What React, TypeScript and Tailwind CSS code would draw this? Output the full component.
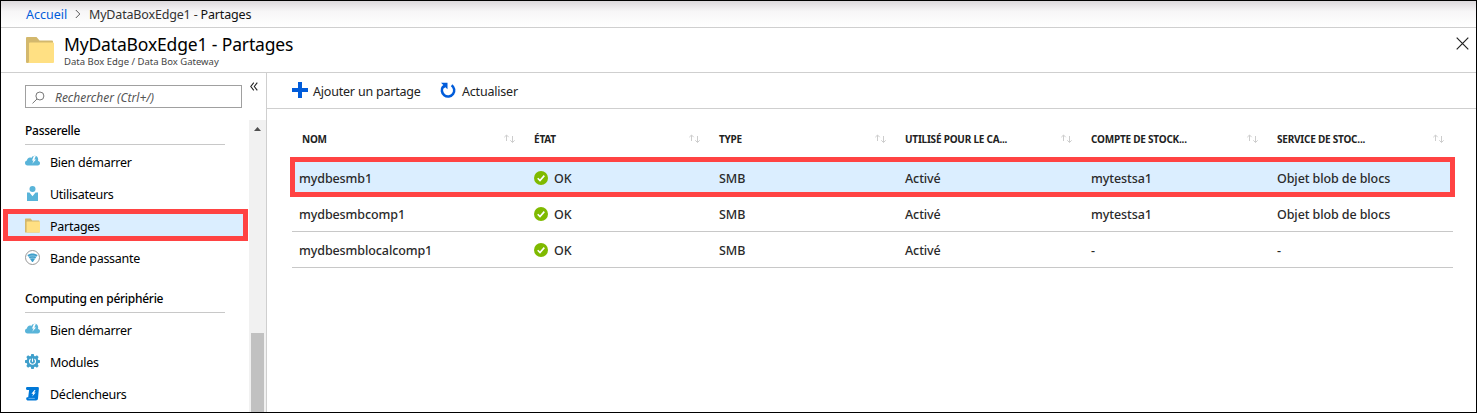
import React from "react";

const CloudIcon = () => (
  <svg width="15" height="15" viewBox="0 0 15 15">
    <path d="M2.500 11.500C1 11.500 0 10.400 0 9.100c0-1.300.8-2.300 2-2.500C2 5 3.300 3.600 5 3.600c.5 0 .9.1 1.300.3C7 2.500 8.300 1.800 9.800 1.800c2 0 3.400 1.500 3.400 3.600 0 .6-.1 1.200-.2 1.700 1.200.1 2 1 2 2.200 0 1.300-.9 2.200-2.200 2.200z" fill="#59b4d9" />
    <path d="M8.800 2L7 6.600h1.600L7.300 9.800 11 5.500H9.300L10.800 2z" fill="#fff" />
  </svg>
);

const UserIcon = () => (
  <svg width="15" height="15" viewBox="0 0 15 15">
    <circle cx="7.500" cy="3" r="3" fill="#59b4d9" />
    <path d="M2 6.500h2.500l3 3.700 3-3.700H13V15H2z" fill="#59b4d9" />
  </svg>
);

const FolderIcon = ({ size }: { size: number }) => (
  <svg width={size} height={size} viewBox="0 0 28 28">
    <path d="M1 1h9.500l3 3.500H26a1 1 0 0 1 1 1V27H1a1 1 0 0 1-1-1V2a1 1 0 0 1 1-1z" fill="#d3b86d" />
    <path d="M4 6.500h23a1 1 0 0 1 1 1V26a1 1 0 0 1-1 1H1.500C2.500 27 3 26 3 25V7.500a1 1 0 0 1 1-1z" fill="#ffe083" />
  </svg>
);

const BandwidthIcon = () => (
  <svg width="15" height="15" viewBox="0 0 15 15">
    <circle cx="7.500" cy="7.500" r="7" fill="#fff" stroke="#8c8c8c" strokeWidth=".9" />
    <path d="M2.300 5.100c3-2.100 7.400-2.100 10.400 0L7.900 12h-.8z" fill="#3f9fcb" />
    <path d="M3.200 6.900c2.400-1.400 6-1.400 8.600 0M4.600 8.900c1.600-1 4.200-1 5.800 0" fill="none" stroke="#fff" strokeWidth=".4" />
  </svg>
);

const GearIcon = () => (
  <svg width="15" height="15" viewBox="0 0 15 15">
    <g fill="#3f9fcb">
      <circle cx="7.500" cy="7.500" r="5.800" />
      <path d="M6.300 0h2.400l.8 3h-4zM6.300 15h2.400l.8-3h-4zM0 6.300v2.400l3 .8v-4zM15 6.300v2.400l-3 .8v-4z" />
      <path d="M6.300 0h2.400l.8 3h-4zM6.300 15h2.400l.8-3h-4zM0 6.300v2.400l3 .8v-4zM15 6.300v2.400l-3 .8v-4z" transform="rotate(45 7.500 7.500)" />
    </g>
    <path d="M5.500 5A3 3 0 1 0 9.500 5" fill="none" stroke="#fff" strokeWidth="1.200" />
    <path d="M7.500 4.500v3.300" stroke="#fff" strokeWidth="1.100" />
  </svg>
);

const TriggerIcon = () => (
  <svg width="15" height="15" viewBox="0 0 15 15">
    <path d="M2.200 1h10.500c.9 0 1.300.6 1.200 1.500L13 12.500c-.1 1.200-.9 2-2 2H3.300C2 14.500 1.200 13.700 1.200 12.700c0-.9.6-1.400 1.500-1.400h.5L4.100 4H2.400C1.500 4 1 3.400 1 2.500 1 1.600 1.400 1 2.200 1z" fill="#0078d7" />
    <path d="M3.500 12.400h6.300" stroke="#8cc6f3" strokeWidth=".7" />
    <path d="M9.500 4L6.400 7.700h1.800l-1 2.700 3.500-3.800H9.100L10.500 4z" fill="#fff" />
  </svg>
);

const SortIcon = () => (
  <svg className="-mt-px" width="12" height="10" viewBox="0 0 12 10" fill="none" stroke="#cdcdcd" strokeWidth="1">
    <path d="M2.500 7V1.200M.3 3.200l2.200-2.200 2.200 2.200M8.500 2v6.300M6.300 6.300l2.200 2.200 2.200-2.200" />
  </svg>
);

const OkIcon = () => (
  <svg width="14" height="14" viewBox="0 0 14 14">
    <circle cx="7" cy="7" r="7" fill="#7fba00" />
    <path d="M3.700 7.200l2.300 2.300 4.300-4.900" fill="none" stroke="#fff" strokeWidth="1.600" />
  </svg>
);

const Item = ({ icon, label, selected }: { icon: React.ReactNode; label: string; selected?: boolean }) => (
  <div className="relative flex h-8 items-center pl-6">
    {selected && <div className="absolute top-[-1px] left-[2px] h-8 w-[245px] border-[5px] border-[#ff4343] bg-[#dbeeff]" />}
    <div className="relative flex items-center gap-[10px]">
      <div className="-mt-[2px]">{icon}</div>
      <span className="pt-[3px] tracking-[-0.27px]">{label}</span>
    </div>
  </div>
);

const Section = ({ title }: { title: string }) => (
  <div className="ml-6 h-[25px] w-[200px] border-b border-[#c8c8c8] pt-px text-[12px] leading-5 font-medium tracking-[-0.27px]">{title}</div>
);

const columns = ["NOM", "ÉTAT", "TYPE", "UTILISÉ POUR LE CA...", "COMPTE DE STOCK...", "SERVICE DE STOC..."];
const rows = [
  ["mydbesmb1", "OK", "SMB", "Activé", "mytestsa1", "Objet blob de blocs"],
  ["mydbesmbcomp1", "OK", "SMB", "Activé", "mytestsa1", "Objet blob de blocs"],
  ["mydbesmblocalcomp1", "OK", "SMB", "Activé", "-", "-"],
];

export default function App() {
  return (
    <div className="flex h-[413px] w-[1477px] flex-col overflow-hidden border border-black bg-white font-['Noto_Sans',sans-serif] text-[12.5px] text-black">
      <nav className="flex h-[27px] shrink-0 items-center border-b border-[#cfcfcf] bg-linear-to-b from-[#dcd8dc] via-[#f7f6f7] via-40% to-white pl-[25px]">
        <span className="w-[49px] pt-[2px] text-[#015cda]">Accueil</span>
        <svg width="6" height="10" viewBox="0 0 6 10" fill="none" stroke="#555"><path d="M.8 1l4 4-4 4" /></svg>
        <span className="ml-[8px] pt-[2px] tracking-[-0.17px] text-[#333]">MyDataBoxEdge1 - <span className="text-[#111]">Partages</span></span>
      </nav>
      <header className="flex h-[45px] shrink-0 items-start border-b border-[#cfcfcf] pt-2 pl-[25px]">
        <FolderIcon size={28} />
        <div className="ml-[10px] flex-1">
          <h1 className="-mt-[2px] text-[17.5px] leading-5 tracking-[-0.15px]">MyDataBoxEdge1 - Partages</h1>
          <p className="mt-[2px] text-[9.5px] leading-3 text-[#444]">Data Box Edge / Data Box Gateway</p>
        </div>
        <svg className="mt-px mr-[7px]" width="13" height="13" viewBox="0 0 13 13" stroke="#222" strokeWidth="1.200"><path d="M.7.7l11.600 11.600M12.300.7L.7 12.300" /></svg>
      </header>
      <div className="flex min-h-0 flex-1">
        <aside className="flex w-[266px] shrink-0 flex-col border-r border-[#cfcfcf]">
          <div className="flex h-[47px] shrink-0 items-start pt-3 pl-6">
            <div className="flex h-[23px] w-[217px] items-center border border-[#a0a0a0] pl-[6px] text-[#555]">
              <svg className="mt-px" width="13" height="13" viewBox="0 0 13 13" fill="none" stroke="#777"><circle cx="7.900" cy="5" r="4" /><path d="M5 8L.5 12.400" /></svg>
              <span className="ml-[10px] pt-[2px] text-[12px] italic">Rechercher (Ctrl+/)</span>
            </div>
            <svg className="-mt-[3px] ml-[8px]" width="8" height="9" viewBox="0 0 8 9" fill="none" stroke="#222" strokeWidth="1.100"><path d="M3.800.7L.8 4.500l3 3.800M7.300.7l-3 3.800 3 3.800" /></svg>
          </div>
          <div className="flex min-h-0 flex-1">
            <div className="w-[248px] shrink-0">
              <Section title="Passerelle" />
              <div className="h-px" />
              <Item icon={<CloudIcon />} label="Bien démarrer" />
              <Item icon={<UserIcon />} label="Utilisateurs" />
              <Item icon={<FolderIcon size={15} />} label="Partages" selected />
              <Item icon={<BandwidthIcon />} label="Bande passante" />
              <div className="h-[14px]" />
              <Section title="Computing en périphérie" />
              <div className="h-px" />
              <Item icon={<CloudIcon />} label="Bien démarrer" />
              <Item icon={<GearIcon />} label="Modules" />
              <Item icon={<TriggerIcon />} label="Déclencheurs" />
            </div>
            <div className="flex flex-1 flex-col items-center bg-[#f1f1f1]">
              <svg className="mt-[7px]" width="7" height="4" viewBox="0 0 7 4"><path d="M0 4L3.500 0 7 4z" fill="#505050" /></svg>
              <div className="mt-[202px] mr-px w-[13px] flex-1 bg-[#c1c1c1]" />
            </div>
          </div>
        </aside>
        <main className="min-w-0 flex-1">
          <div className="flex h-9 items-center border-b border-[#cfcfcf] pl-[25px] text-[#222]">
            <svg className="-mt-px" width="16" height="16" viewBox="0 0 16 16"><path d="M6 0h4v6h6v4h-6v6H6v-6H0V6h6z" fill="#015cda" /></svg>
            <span className="ml-[5px] w-[127px] pt-[3px] tracking-[-0.2px]">Ajouter un partage</span>
            <svg className="-mt-px" width="17" height="17" viewBox="0 0 17 17"><path d="M3.200 4.400A6.200 6.200 0 1 0 11.600 3.200" fill="none" stroke="#015cda" strokeWidth="2.500" /><path d="M1 .8h6.500v6.500L5.400 5.200 3.600 6.600 2 4.800 3.300 3.100z" fill="#015cda" /></svg>
            <span className="ml-[5px] pt-[3px] tracking-[-0.2px]">Actualiser</span>
          </div>
          <div className="mt-3 ml-[25px] w-[1161px]">
            <div className="mb-[3px] grid h-9 grid-cols-[235px_185px_186px_186px_186px_176px] items-center pl-[7px] text-[10px] font-bold text-[#222]">
              {columns.map((c, i) => (
                <div key={c} className={i === 0 ? "flex items-center justify-between pr-[18px] pl-[3px]" : i === 5 ? "flex items-center justify-between pr-[8px]" : "flex items-center justify-between pr-[18px]"}>
                  <span className="tracking-[-0.22px]">{c}</span>
                  <SortIcon />
                </div>
              ))}
            </div>
            {rows.map((r, n) => (
              <div key={r[0]} className="relative grid h-9 grid-cols-[235px_185px_186px_186px_186px_176px] items-center border-b border-[#c8c8c8] pl-[7px] font-medium text-[#2a2a2a]">
                {n === 0 && <div className="absolute -top-[3px] -left-[2px] h-10 w-[1165px] border-[5px] border-[#ff4343] bg-[#dbeeff]" />}
                {r.map((v, i) => (
                  <div key={i} className="relative flex items-center gap-[6px]">
                    {i === 1 && <OkIcon />}
                    <span className="pt-[3px] tracking-[-0.1px]">{v}</span>
                  </div>
                ))}
              </div>
            ))}
          </div>
        </main>
      </div>
    </div>
  );
}
